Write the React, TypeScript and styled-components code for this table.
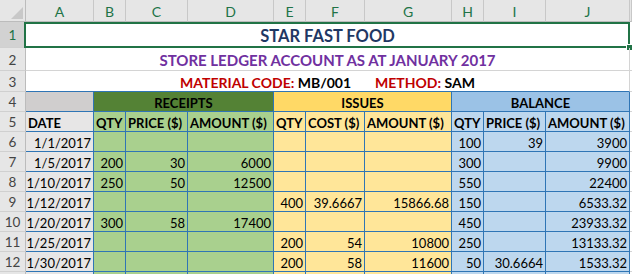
import styled, { createGlobalStyle } from "styled-components";

const GlobalStyle = createGlobalStyle`
  html, body {
    margin: 0;
    padding: 0;
    background: #ffffff;
    overflow: hidden;
  }
`;

const colors = {
  headBg: "#e6e6e6",
  headActive: "#d2d2d2",
  headText: "#444444",
  excelGreen: "#217346",
  grid: "#d4d4d4",
  blue: "#2f75b5",
  greyHead: "#d0cece",
  greyCell: "#e7e6e6",
  greenHead: "#548235",
  greenCell: "#a9d08e",
  yellowHead: "#ffd966",
  yellowCell: "#ffe699",
  blueHead: "#9bc2e6",
  blueCell: "#bdd7ee",
};

const columns = ["A", "B", "C", "D", "E", "F", "G", "H", "I", "J"];

// background of each column A..J in the ledger body
const bodyColors = [
  colors.greyCell,
  colors.greenCell,
  colors.greenCell,
  colors.greenCell,
  colors.yellowCell,
  colors.yellowCell,
  colors.yellowCell,
  colors.blueCell,
  colors.blueCell,
  colors.blueCell,
];

const subHeads = [
  "DATE",
  "QTY",
  "PRICE ($)",
  "AMOUNT ($)",
  "QTY",
  "COST ($)",
  "AMOUNT ($)",
  "QTY",
  "PRICE ($)",
  "AMOUNT ($)",
];

const ledger = [
  ["1/1/2017", "", "", "", "", "", "", "100", "39", "3900"],
  ["1/5/2017", "200", "30", "6000", "", "", "", "300", "", "9900"],
  ["1/10/2017", "250", "50", "12500", "", "", "", "550", "", "22400"],
  ["1/12/2017", "", "", "", "400", "39.6667", "15866.68", "150", "", "6533.32"],
  ["1/20/2017", "300", "58", "17400", "", "", "", "450", "", "23933.32"],
  ["1/25/2017", "", "", "", "200", "54", "10800", "250", "", "13133.32"],
  ["1/30/2017", "", "", "", "200", "58", "11600", "50", "30.6664", "1533.32"],
];

const emptyRow = ["", "", "", "", "", "", "", "", "", ""];

const App = () => {
  return (
    <>
      <GlobalStyle />
      <Sheet>
        <Corner>
          <svg width="12" height="12" viewBox="0 0 12 12">
            <polygon points="12,0 12,12 0,12" fill="#c8c8c8" />
          </svg>
        </Corner>
        {columns.map((c) => (
          <ColHead key={c}>{c}</ColHead>
        ))}
        <ColHead $plain />

        <RowHead $active>1</RowHead>
        <Merged $span={10}>
          <Title>STAR FAST FOOD</Title>
          <Selection>
            <Handle />
          </Selection>
        </Merged>
        <Blank />

        <RowHead>2</RowHead>
        <Merged $span={10}>
          <SubTitle>STORE LEDGER ACCOUNT AS AT JANUARY 2017</SubTitle>
        </Merged>
        <Blank />

        <RowHead>3</RowHead>
        <Merged $span={10} $line={colors.blue}>
          <Meta>
            <Red>MATERIAL CODE:</Red> MB/001
            <Gap />
            <Red>METHOD:</Red> SAM
          </Meta>
        </Merged>
        <Blank />

        <RowHead>4</RowHead>
        <Cell $bg={colors.greyHead} />
        <Cell $bg={colors.greenHead} $span={3} $align="center" $bold>
          RECEIPTS
        </Cell>
        <Cell $bg={colors.yellowHead} $span={3} $align="center" $bold>
          ISSUES
        </Cell>
        <Cell $bg={colors.blueHead} $span={3} $align="center" $bold>
          BALANCE
        </Cell>
        <Blank />

        <RowHead>5</RowHead>
        {subHeads.map((h, i) => (
          <Cell key={i} $bg={bodyColors[i]} $bold>
            {h}
          </Cell>
        ))}
        <Blank />

        {ledger.map((row, r) => (
          <Row key={r} label={String(r + 6)} values={row} />
        ))}
        {/* row 13 only peeks in at the bottom edge */}
        <Row label="" values={emptyRow} />
      </Sheet>
    </>
  );
};

const Row = ({ label, values }: { label: string; values: string[] }) => (
  <>
    <RowHead>{label}</RowHead>
    {values.map((v, i) => (
      <Cell key={i} $bg={bodyColors[i]} $align="right">
        {v}
      </Cell>
    ))}
    <Blank />
  </>
);

const Sheet = styled.div`
  display: grid;
  width: 632px;
  height: 274px;
  overflow: hidden;
  grid-template-columns: 26px 68px 32px 62px 86px 32px 59px 87px 32px 62px 84px 1fr;
  grid-template-rows: 22px 26px 23px 21px 20px 20px repeat(8, 20px);
  font-family: "Lato", "Carlito", "Liberation Sans", sans-serif;
  font-size: 13px;
  color: #000000;
`;

const Corner = styled.div`
  background: ${colors.headBg};
  border-right: 1px solid #bcbcbc;
  border-bottom: 1px solid #bcbcbc;
  box-sizing: border-box;
  display: flex;
  align-items: flex-end;
  justify-content: flex-end;
  padding: 0 2px 2px 0;
`;

const ColHead = styled.div<{ $plain?: boolean }>`
  background: ${colors.headBg};
  color: ${({ $plain }) => ($plain ? colors.headText : colors.excelGreen)};
  border-right: 1px solid #c8c8c8;
  border-bottom: 1px solid #bcbcbc;
  box-sizing: border-box;
  display: flex;
  align-items: center;
  justify-content: center;
  font-size: 14px;
  padding-top: 1px;
`;

const RowHead = styled.div<{ $active?: boolean }>`
  background: ${({ $active }) => ($active ? colors.headActive : colors.headBg)};
  color: ${({ $active }) => ($active ? colors.excelGreen : colors.headText)};
  border-right: 1px solid #bcbcbc;
  border-bottom: 1px solid #d0d0d0;
  box-sizing: border-box;
  display: flex;
  align-items: center;
  justify-content: center;
  font-size: 13.5px;
  padding-top: 1px;
`;

const Merged = styled.div<{ $span: number; $line?: string }>`
  grid-column: span ${({ $span }) => $span};
  position: relative;
  border-right: 1px solid ${colors.grid};
  border-bottom: 1px solid ${({ $line }) => $line ?? colors.grid};
  box-sizing: border-box;
  display: flex;
  align-items: center;
  justify-content: center;
  font-weight: 700;
`;

const Blank = styled.div`
  border-bottom: 1px solid ${colors.grid};
`;

const Title = styled.span`
  font-size: 16.5px;
  color: #1f3864;
  padding-top: 2px;
`;

const SubTitle = styled.span`
  font-size: 15px;
  color: #7030a0;
  padding-top: 2px;
`;

const Meta = styled.span`
  font-size: 14px;
  color: #000000;
  display: flex;
  align-items: baseline;
  white-space: pre;
  padding-top: 2px;
`;

const Red = styled.span`
  color: #c00000;
`;

const Gap = styled.span`
  display: inline-block;
  width: 24px;
`;

const Selection = styled.div`
  position: absolute;
  left: -2px;
  top: 0;
  right: -1px;
  bottom: -1px;
  border: 2px solid ${colors.excelGreen};
  pointer-events: none;
`;

const Handle = styled.div`
  position: absolute;
  right: -5px;
  bottom: -5px;
  width: 5px;
  height: 5px;
  background: ${colors.excelGreen};
  border: 1px solid #ffffff;
`;

const Cell = styled.div<{
  $bg: string;
  $span?: number;
  $align?: "left" | "center" | "right";
  $bold?: boolean;
}>`
  grid-column: span ${({ $span }) => $span ?? 1};
  background: ${({ $bg }) => $bg};
  border-right: 1px solid ${colors.blue};
  border-bottom: 1px solid ${colors.blue};
  box-sizing: border-box;
  display: flex;
  align-items: center;
  justify-content: ${({ $align }) =>
    $align === "right" ? "flex-end" : $align === "center" ? "center" : "flex-start"};
  padding: 2px 2px 0 2px;
  font-weight: ${({ $bold }) => ($bold ? 700 : 400)};
  white-space: nowrap;
  overflow: hidden;
`;

export default App;
